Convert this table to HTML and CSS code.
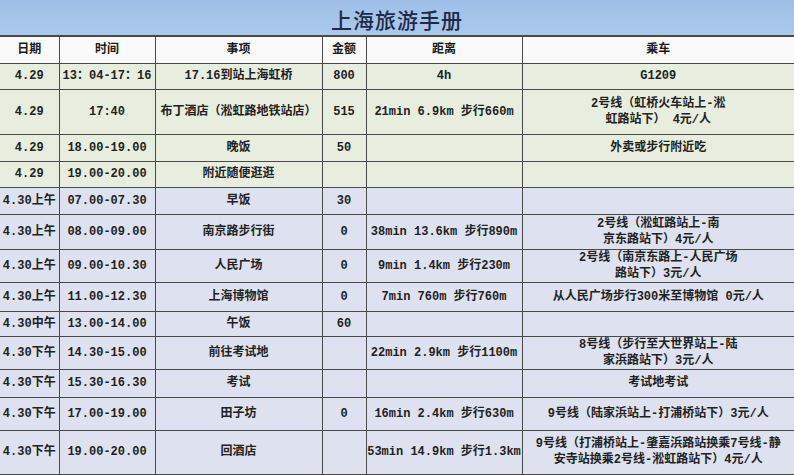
FILE: index.html
```html
<!DOCTYPE html>
<html lang="zh-CN">
<head>
<meta charset="utf-8">
<title>上海旅游手册</title>
<link rel="stylesheet" href="styles.css">
</head>
<body>
<div class="sheet">
  <div class="title">上海旅游手册</div>
  <table class="plan">
    <colgroup>
      <col class="c-date"><col class="c-time"><col class="c-item"><col class="c-cost"><col class="c-dist"><col class="c-ride">
    </colgroup>
    <thead>
      <tr class="h-head"><th>日期</th><th>时间</th><th>事项</th><th>金额</th><th>距离</th><th>乘车</th></tr>
    </thead>
    <tbody>
      <tr class="d29 h26"><td>4.29</td><td>13：04-17：16</td><td>17.16到站上海虹桥</td><td>800</td><td>4h</td><td>G1209</td></tr>
      <tr class="d29 h45"><td>4.29</td><td>17:40</td><td>布丁酒店（淞虹路地铁站店）</td><td>515</td><td>21min 6.9km 步行660m</td><td>2号线（虹桥火车站上-淞<br>虹路站下） 4元/人</td></tr>
      <tr class="d29 h27"><td>4.29</td><td>18.00-19.00</td><td>晚饭</td><td>50</td><td></td><td>外卖或步行附近吃</td></tr>
      <tr class="d29 h26"><td>4.29</td><td>19.00-20.00</td><td>附近随便逛逛</td><td></td><td></td><td></td></tr>
      <tr class="d30 h27"><td>4.30上午</td><td>07.00-07.30</td><td>早饭</td><td>30</td><td></td><td></td></tr>
      <tr class="d30 h35"><td>4.30上午</td><td>08.00-09.00</td><td>南京路步行街</td><td>0</td><td>38min 13.6km 步行890m</td><td>2号线（淞虹路站上-南<br>京东路站下）4元/人</td></tr>
      <tr class="d30 h32"><td>4.30上午</td><td>09.00-10.30</td><td>人民广场</td><td>0</td><td>9min 1.4km 步行230m</td><td>2号线（南京东路上-人民广场<br>路站下）3元/人</td></tr>
      <tr class="d30 h29"><td>4.30上午</td><td>11.00-12.30</td><td>上海博物馆</td><td>0</td><td>7min 760m 步行760m</td><td>从人民广场步行300米至博物馆 0元/人</td></tr>
      <tr class="d30 h25"><td>4.30中午</td><td>13.00-14.00</td><td>午饭</td><td>60</td><td></td><td></td></tr>
      <tr class="d30 h33"><td>4.30下午</td><td>14.30-15.00</td><td>前往考试地</td><td></td><td>22min 2.9km 步行1100m</td><td>8号线（步行至大世界站上-陆<br>家浜路站下）3元/人</td></tr>
      <tr class="d30 h28"><td>4.30下午</td><td>15.30-16.30</td><td>考试</td><td></td><td></td><td>考试地考试</td></tr>
      <tr class="d30 h33"><td>4.30下午</td><td>17.00-19.00</td><td>田子坊</td><td>0</td><td>16min 2.4km 步行630m</td><td>9号线（陆家浜站上-打浦桥站下）3元/人</td></tr>
      <tr class="d30 h44"><td>4.30下午</td><td>19.00-20.00</td><td>回酒店</td><td></td><td>53min 14.9km 步行1.3km</td><td>9号线（打浦桥站上-肇嘉浜路站换乘7号线-静<br>安寺站换乘2号线-淞虹路站下）4元/人</td></tr>
    </tbody>
  </table>
</div>
</body>
</html>
```
FILE: styles.css
```css
html, body {
  margin: 0;
  padding: 0;
  background: #ffffff;
}

.sheet {
  width: 794px;
  height: 475px;
  overflow: hidden;
  display: flex;
  flex-direction: column;
}

.title {
  height: 35px;
  flex: none;
  box-sizing: border-box;
  display: flex;
  align-items: center;
  justify-content: center;
  padding-top: 2px;
  background: linear-gradient(#9ebfe6, #abc9ec);
  color: #1d2a48;
  font-family: "Noto Sans CJK SC", sans-serif;
  font-size: 21px;
  font-weight: 500;
  letter-spacing: 1px;
}

.plan {
  width: 794px;
  table-layout: fixed;
  border-collapse: collapse;
  font-family: "Liberation Mono", "Noto Sans CJK SC", monospace;
  font-size: 12px;
  font-weight: bold;
  color: #222;
}

.c-date { width: 59px; }
.c-time { width: 96px; }
.c-item { width: 167px; }
.c-cost { width: 44px; }
.c-dist { width: 156px; }
.c-ride { width: 272px; }

.plan th,
.plan td {
  border: 1px solid #4a4a4a;
  padding: 0;
  text-align: center;
  vertical-align: middle;
  white-space: nowrap;
  line-height: 16px;
  overflow: visible;
}

.plan tr > :first-child { border-left: none; }
.plan tr > :last-child { border-right: none; }

.plan thead tr { border-top: 2px solid #4a4a4a; }

.h-head { height: 27px; background: #fafafa; }
.plan th { font-weight: bold; color: #1a1a1a; }

.d29 { background: #e8eedf; }
.d30 { background: #dee2f0; }

.h25 { height: 25px; }
.h26 { height: 26px; }
.h27 { height: 27px; }
.h28 { height: 28px; }
.h29 { height: 29px; }
.h32 { height: 32px; }
.h33 { height: 33px; }
.h35 { height: 35px; }
.h44 { height: 44px; }
.h45 { height: 45px; }
```
